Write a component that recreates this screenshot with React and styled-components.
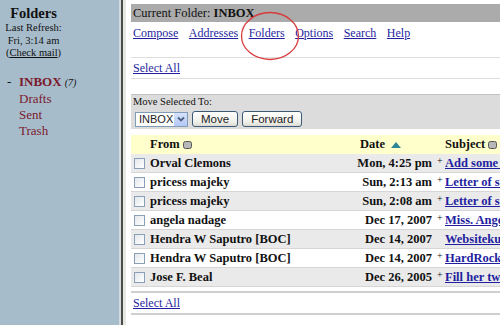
import React from 'react'
import styled, { createGlobalStyle } from 'styled-components'

const GlobalStyle = createGlobalStyle`
  html, body {
    margin: 0;
    padding: 0;
    background: #fff;
    overflow: hidden;
  }
  body {
    font-family: "Liberation Serif", "Times New Roman", serif;
    color: #111;
  }
`

const Page = styled.div`
  display: flex;
  width: 500px;
  height: 325px;
  overflow: hidden;
`

const Sidebar = styled.div`
  width: 119px;
  flex: none;
  background: #a7bccb;
  padding-top: 5px;
  box-sizing: border-box;
`

const SideHead = styled.div`
  width: 67px;
  text-align: center;
`

const SideTitle = styled.div`
  font-size: 14.5px;
  font-weight: bold;
  line-height: 16px;
`

const SideInfo = styled.div`
  font-size: 10.5px;
  line-height: 12.5px;
  margin-top: 1px;
  a {
    color: #111;
    text-decoration: underline;
  }
`

const FolderList = styled.div`
  margin-top: 14px;
  padding-left: 7px;
  font-size: 13px;
  line-height: 16.3px;
`

const FolderRow = styled.div`
  display: flex;
  align-items: baseline;
`

const Dash = styled.span`
  width: 12px;
  flex: none;
`

const FolderName = styled.span`
  color: #7b1a2c;
  font-weight: ${p => (p.$active ? 'bold' : 'normal')};
  margin-left: ${p => (p.$active ? '0' : '12px')};
`

const Count = styled.span`
  font-style: italic;
  font-size: 10px;
  margin-left: 3px;
`

const Divider = styled.div`
  width: 2px;
  flex: none;
  background: #4b4b47;
  border-left: 2px solid #d4dbe0;
  border-right: 3px solid #e6e6e2;
`

const Main = styled.div`
  position: relative;
  flex: none;
  width: 520px;
  margin-left: 5px;
  padding-top: 4px;
`

const FolderBar = styled.div`
  height: 18px;
  line-height: 18px;
  background: #ababab;
  font-size: 12.5px;
  padding-left: 2px;
  color: #111;
`

const Nav = styled.div`
  display: flex;
  gap: 10.5px;
  height: 22px;
  line-height: 22px;
  padding-left: 2px;
  font-size: 12px;
`

const Link = styled.a`
  color: #1f1fa0;
  text-decoration: underline;
  font-weight: ${p => (p.$bold ? 'bold' : 'normal')};
  white-space: nowrap;
`

const SelectBar = styled.div`
  margin-top: ${p => p.$top}px;
  height: 20px;
  line-height: 20px;
  padding-left: 2px;
  font-size: 12px;
  border-top: ${p => p.$thick ? 2 : 1}px solid ${p => p.$thick ? '#cfcfcf' : '#dcdcdc'};
  border-bottom: ${p => p.$thick ? 2 : 1}px solid ${p => p.$thick ? '#cfcfcf' : '#dcdcdc'};
`

const MoveBox = styled.div`
  margin-top: 15px;
  height: 35px;
  background: #dcdcdc;
  border-top: 1px solid #c2c2c2;
  padding-left: 2px;
  box-sizing: border-box;
`

const MoveLabel = styled.div`
  font-size: 10.5px;
  line-height: 14px;
`

const Controls = styled.div`
  display: flex;
  align-items: center;
  gap: 3px;
  margin-top: 2px;
`

const SelectBox = styled.div`
  display: flex;
  align-items: center;
  width: 53px;
  height: 15px;
  margin-left: 2px;
  background: #fff;
  border: 1px solid #7f9db9;
  font-family: "Liberation Sans", Arial, sans-serif;
  font-size: 11px;
  color: #222;
  box-sizing: border-box;
`

const SelectText = styled.span`
  flex: 1;
  padding-left: 3px;
`

const SelectArrow = styled.span`
  width: 14px;
  height: 13px;
  background: linear-gradient(#d6e2fb, #b4c8f5);
  border-left: 1px solid #fff;
  display: flex;
  align-items: center;
  justify-content: center;
`

const Button = styled.button`
  height: 16px;
  padding: 0 8px;
  font-family: "Liberation Sans", Arial, sans-serif;
  font-size: 11.5px;
  line-height: 12px;
  color: #222;
  background: linear-gradient(#ffffff, #f0f0ea 70%, #dcdcd4);
  border: 1px solid #3c5a78;
  border-radius: 3px;
  margin-left: ${p => p.$gap || 0}px;
`

const Table = styled.div`
  margin-top: 6px;
  font-size: 12.5px;
`

const Grid = styled.div`
  display: grid;
  grid-template-columns: 19px 206px 78px 11px 1fr;
  align-items: center;
  height: ${p => p.$head ? 19 : 18}px;
  background: ${p => p.$head ? '#ffffcc' : p.$shade ? '#eaeaea' : '#ffffff'};
  border-bottom: ${p => p.$head ? 'none' : '1px solid #d6d6d6'};
  font-weight: bold;
  white-space: nowrap;
`

const Cell = styled.div`
  display: flex;
  align-items: center;
  justify-content: ${p => p.$right ? 'flex-end' : 'flex-start'};
  padding-left: ${p => p.$pl || 0}px;
  padding-right: ${p => p.$pr || 0}px;
  overflow: hidden;
`

const Check = styled.span`
  width: 11px;
  height: 11px;
  margin-left: 3px;
  border: 1px solid #8aa0b8;
  background: linear-gradient(135deg, #e4e8ec, #ffffff);
  box-sizing: border-box;
`

const Plus = styled.span`
  font-size: 10px;
  font-weight: normal;
  position: relative;
  top: -3px;
  padding-left: 3px;
`

const SortIcon = () => (
  <svg width="9" height="8" viewBox="0 0 9 8" style={{ marginLeft: 3 }}>
    <rect x="0.5" y="0.5" width="8" height="7" rx="2" fill="#b8b8b8" stroke="#555" />
  </svg>
)

const UpIcon = () => (
  <svg width="10" height="6" viewBox="0 0 10 6" style={{ marginLeft: 6 }}>
    <path d="M0 6 L5 0 L10 6 Z" fill="#2f8696" />
  </svg>
)

const Annotation = styled.svg`
  position: absolute;
  left: 108px;
  top: 10px;
  pointer-events: none;
`

const messages = [
  { from: 'Orval Clemons', date: 'Mon, 4:25 pm', plus: true, subject: 'Add some pictures' },
  { from: 'pricess majeky', date: 'Sun, 2:13 am', plus: true, subject: 'Letter of support' },
  { from: 'pricess majeky', date: 'Sun, 2:08 am', plus: true, subject: 'Letter of support' },
  { from: 'angela nadage', date: 'Dec 17, 2007', plus: true, subject: 'Miss. Angela' },
  { from: 'Hendra W Saputro [BOC]', date: 'Dec 14, 2007', plus: false, subject: 'Websiteku' },
  { from: 'Hendra W Saputro [BOC]', date: 'Dec 14, 2007', plus: true, subject: 'HardRock Cafe' },
  { from: 'Jose F. Beal', date: 'Dec 26, 2005', plus: true, subject: 'Fill her twice' },
]

export default function App() {
  return (
    <Page>
      <GlobalStyle />
      <Sidebar>
        <SideHead>
          <SideTitle>Folders</SideTitle>
          <SideInfo>
            <div>Last Refresh:</div>
            <div>Fri, 3:14 am</div>
            <div>(<a href="#">Check mail</a>)</div>
          </SideInfo>
        </SideHead>
        <FolderList>
          <FolderRow>
            <Dash>-</Dash>
            <FolderName $active>INBOX</FolderName>
            <Count>(7)</Count>
          </FolderRow>
          <FolderRow><FolderName>Drafts</FolderName></FolderRow>
          <FolderRow><FolderName>Sent</FolderName></FolderRow>
          <FolderRow><FolderName>Trash</FolderName></FolderRow>
        </FolderList>
      </Sidebar>
      <Divider />
      <Main>
        <FolderBar>Current Folder: <b>INBOX</b></FolderBar>
        <Nav>
          <Link href="#">Compose</Link>
          <Link href="#">Addresses</Link>
          <Link href="#">Folders</Link>
          <Link href="#">Options</Link>
          <Link href="#">Search</Link>
          <Link href="#">Help</Link>
        </Nav>
        <Annotation width="62" height="52" viewBox="0 0 62 52">
          <ellipse cx="31" cy="26" rx="28.5" ry="23.5" fill="none" stroke="#d83a3a" strokeWidth="1.3" />
        </Annotation>
        <SelectBar $top={13}><Link href="#">Select All</Link></SelectBar>
        <MoveBox>
          <MoveLabel>Move Selected To:</MoveLabel>
          <Controls>
            <SelectBox>
              <SelectText>INBOX</SelectText>
              <SelectArrow>
                <svg width="8" height="6" viewBox="0 0 8 6">
                  <path d="M1 1.5 L4 4.5 L7 1.5" fill="none" stroke="#4d6185" strokeWidth="1.8" />
                </svg>
              </SelectArrow>
            </SelectBox>
            <Button $gap={1}>Move</Button>
            <Button $gap={1}>Forward</Button>
          </Controls>
        </MoveBox>
        <Table>
          <Grid $head>
            <Cell />
            <Cell>From<SortIcon /></Cell>
            <Cell $pl={4}>Date<UpIcon /></Cell>
            <Cell />
            <Cell>Subject<SortIcon /></Cell>
          </Grid>
          {messages.map((m, i) => (
            <Grid key={i} $shade={i % 2 === 0}>
              <Cell><Check /></Cell>
              <Cell>{m.from}</Cell>
              <Cell $right $pr={2}>{m.date}</Cell>
              <Cell>{m.plus && <Plus>+</Plus>}</Cell>
              <Cell><Link href="#" $bold>{m.subject}</Link></Cell>
            </Grid>
          ))}
        </Table>
        <SelectBar $top={4} $thick><Link href="#">Select All</Link></SelectBar>
      </Main>
    </Page>
  )
}
